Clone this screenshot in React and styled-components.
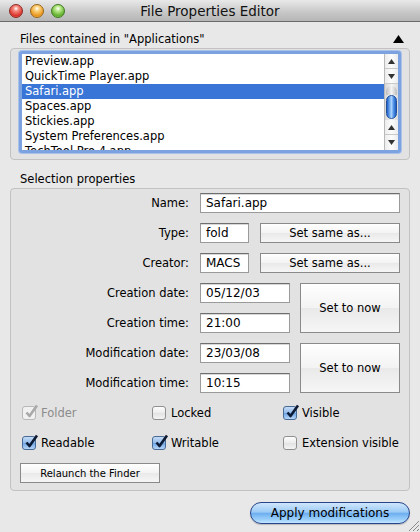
import styled, { createGlobalStyle } from 'styled-components';

const Global = createGlobalStyle`
  html, body {
    margin: 0;
    padding: 0;
    background: #e8e8e8;
  }
  * { box-sizing: border-box; }
`

const Window = styled.div`
  position: relative;
  width: 420px;
  height: 532px;
  background: #e8e8e8;
  font-family: "DejaVu Sans", "Liberation Sans", sans-serif;
  font-size: 11.5px;
  color: #000;
  overflow: hidden;
`
const TitleBar = styled.div`
  height: 22px;
  display: flex;
  align-items: center;
  padding-left: 9px;
  background: linear-gradient(#e9e9e9, #c6c6c6 60%, #b6b6b6);
  border-bottom: 1px solid #6b6b6b;
`
const Lights = styled.div`
  display: flex;
  gap: 7px;
  width: 0;
`
const Light = styled.div`
  flex: none;
  width: 14px;
  height: 14px;
  border-radius: 50%;
  border: 1px solid ${p => p.edge};
  background: radial-gradient(circle at 50% 30%, #fff 0, ${p => p.hi} 25%, ${p => p.base} 70%, ${p => p.hi} 100%);
`
const Title = styled.div`
  flex: 1;
  text-align: center;
  font-size: 13.5px;
  padding-right: 9px;
  color: #111;
`
const Content = styled.div`
  padding: 8px 10px 0 10px;
`
const SectionHead = styled.div`
  display: flex;
  align-items: center;
  justify-content: space-between;
  height: 18px;
  padding: 0 6px 0 10px;
`
const GroupBox = styled.div`
  border: 1px solid #c2c2c2;
  border-radius: 4px;
  background: #e2e2e2;
  padding: ${p => p.pad};
`
const ListFrame = styled.div`
  display: flex;
  height: 102px;
  border: 3px solid #7da2e0;
  border-radius: 3px;
  background: #fff;
  box-shadow: 0 0 0 1px #a9c2ec;
`
const ListRows = styled.div`
  flex: 1;
  overflow: hidden;
`
const Row = styled.div`
  height: 15px;
  line-height: 15px;
  padding-left: 3px;
  font-size: 11.5px;
  background: ${p => (p.selected ? '#3875d7' : '#fff')};
  color: ${p => (p.selected ? '#fff' : '#000')};
  white-space: nowrap;
`
const Scroll = styled.div`
  width: 14px;
  display: flex;
  flex-direction: column;
  background: linear-gradient(90deg, #d6d6d6, #f4f4f4 50%, #dcdcdc);
  border-left: 1px solid #b9b9b9;
`
const Arrow = styled.div`
  height: 15px;
  display: flex;
  align-items: center;
  justify-content: center;
  border-bottom: 1px solid #c9c9c9;
  background: linear-gradient(90deg, #ececec, #fcfcfc 50%, #ececec);
`
const Track = styled.div`
  flex: 1;
  display: flex;
  flex-direction: column;
  padding-top: 2px;
`
const ThumbCap = styled.div`
  height: 9px;
  margin: 0 1px;
  border-radius: 6px 6px 0 0;
  background: linear-gradient(90deg, #bdbdbd, #f4f4f4 50%, #bdbdbd);
`
const Thumb = styled.div`
  height: 24px;
  margin: 0 1px;
  border-radius: 6px;
  border: 1px solid #24509a;
  background: linear-gradient(90deg, #1d5fc8, #7fb6f3 35%, #a9d2fb 50%, #4a8de6 75%, #1f5cc0);
`
const Spacer = styled.div`
  flex: 1;
`
const Form = styled.div`
  display: flex;
  flex-direction: column;
  gap: 10px;
`
const FieldRow = styled.div`
  display: flex;
  align-items: center;
  height: 20px;
`
const Label = styled.div`
  width: 169px;
  margin-right: 11px;
  text-align: right;
  white-space: nowrap;
`
const Field = styled.div`
  width: ${p => p.w}px;
  height: 20px;
  line-height: 19px;
  padding-left: 5px;
  font-size: 12px;
  background: #fff;
  border: 1px solid #9a9a9a;
  border-top-color: #6e6e6e;
  box-shadow: inset 0 1px 0 #d8d8d8;
`
const BevelButton = styled.div`
  width: ${p => p.w}px;
  height: ${p => p.h}px;
  margin-left: ${p => p.ml}px;
  display: flex;
  align-items: center;
  justify-content: center;
  border: 1px solid #8a8a8a;
  background: linear-gradient(#ffffff, #f3f3f3 50%, #e9e9e9 51%, #f6f6f6);
  font-size: ${p => p.fs || 11.5}px;
`
const DateBlock = styled.div`
  display: grid;
  grid-template-columns: 169px 90px 100px;
  grid-template-rows: 20px 20px;
  column-gap: 11px;
  row-gap: 10px;
  align-items: center;
`
const NowButton = styled(BevelButton)`
  grid-column: 3;
  grid-row: 1 / span 2;
  height: 50px;
  margin-left: -1px;
`
const CheckGrid = styled.div`
  display: grid;
  grid-template-columns: 130px 131px 1fr;
  padding-left: 2px;
  height: 20px;
  align-items: center;
`
const Check = styled.div`
  display: flex;
  align-items: center;
  gap: 5px;
  color: ${p => (p.disabled ? '#8c8c8c' : '#000')};
  white-space: nowrap;
`
const Box = styled.div`
  width: 14px;
  height: 14px;
  border-radius: 3px;
  position: relative;
  border: 1px solid ${p => (p.disabled ? '#b8b8b8' : p.on ? '#4a6a96' : '#8f8f8f')};
  background: ${p =>
    p.disabled
      ? '#f1f1f1'
      : p.on
      ? 'linear-gradient(#c6dcf6, #8fb9ea 50%, #6ea4e4 51%, #b6d6f8)'
      : 'linear-gradient(#fdfdfd, #ececec 50%, #e2e2e2 51%, #f4f4f4)'};
  & > svg {
    position: absolute;
    left: 1px;
    top: -3px;
  }
`
const Footer = styled.div`
  display: flex;
  justify-content: flex-end;
  padding: 11px 0 0 0;
`
const ApplyButton = styled.div`
  width: 160px;
  height: 22px;
  border-radius: 11px;
  border: 1px solid #27458a;
  display: flex;
  align-items: center;
  justify-content: center;
  font-size: 12px;
  background: linear-gradient(#cfe6fc, #9ccbf6 45%, #6eaff0 52%, #9fd2fb 85%, #c5e6ff);
  box-shadow: 0 1px 1px rgba(0, 0, 0, 0.2);
`
const Grip = styled.svg`
  position: absolute;
  right: 0;
  bottom: 0;
`

const files = [
  'Preview.app',
  'QuickTime Player.app',
  'Safari.app',
  'Spaces.app',
  'Stickies.app',
  'System Preferences.app',
  'TechTool Pro 4.app',
]

const Tri = ({ up }) => (
  <svg width="7" height="5" viewBox="0 0 7 5">
    <path d={up ? 'M3.5 0L7 5H0z' : 'M0 0h7L3.5 5z'} fill="#333" />
  </svg>
)

const Tick = () => (
  <svg width="15" height="15" viewBox="0 0 15 15">
    <path d="M2.5 8.5L5.5 12L13 1.5" fill="none" stroke="currentColor" strokeWidth="2.6" strokeLinejoin="round" />
  </svg>
)

const CheckBox = ({ label, on, disabled }) => (
  <Check disabled={disabled}>
    <Box on={on} disabled={disabled} style={{ color: disabled ? '#a9a9a9' : '#0d1a33' }}>
      {on && <Tick />}
    </Box>
    {label}
  </Check>
)

const App = () => {
  return (
    <Window>
      <Global />
      <TitleBar>
        <Lights>
          <Light base="#d8322b" hi="#f58a7e" edge="#8e2a24" />
          <Light base="#e8951c" hi="#fbd27b" edge="#9a6519" />
          <Light base="#5fae2b" hi="#b9e98a" edge="#3f7a20" />
        </Lights>
        <Title>File Properties Editor</Title>
      </TitleBar>
      <Content>
        <SectionHead>
          <span>Files contained in "Applications"</span>
          <svg width="11" height="8" viewBox="0 0 11 8">
            <path d="M5.5 0L11 8H0z" fill="#000" />
          </svg>
        </SectionHead>
        <GroupBox pad="2px 8px 6px 8px">
          <ListFrame>
            <ListRows>
              {files.map(f => (
                <Row key={f} selected={f === 'Safari.app'}>{f}</Row>
              ))}
            </ListRows>
            <Scroll>
              <Arrow><Tri up /></Arrow>
              <Arrow><Tri /></Arrow>
              <Track>
                <ThumbCap />
                <Thumb />
                <Spacer />
              </Track>
              <Arrow><Tri up /></Arrow>
              <Arrow style={{ borderBottom: 'none' }}><Tri /></Arrow>
            </Scroll>
          </ListFrame>
        </GroupBox>
        <SectionHead style={{ marginTop: 10 }}>
          <span>Selection properties</span>
        </SectionHead>
        <GroupBox pad="4px 0 7px 9px">
          <Form>
            <FieldRow>
              <Label>Name:</Label>
              <Field w={200}>Safari.app</Field>
            </FieldRow>
            <FieldRow>
              <Label>Type:</Label>
              <Field w={49}>fold</Field>
              <BevelButton w={140} h={20} ml={11}>Set same as...</BevelButton>
            </FieldRow>
            <FieldRow>
              <Label>Creator:</Label>
              <Field w={49}>MACS</Field>
              <BevelButton w={140} h={20} ml={11}>Set same as...</BevelButton>
            </FieldRow>
            <DateBlock>
              <Label>Creation date:</Label>
              <Field w={90}>05/12/03</Field>
              <NowButton w={100}>Set to now</NowButton>
              <Label>Creation time:</Label>
              <Field w={90}>21:00</Field>
            </DateBlock>
            <DateBlock>
              <Label>Modification date:</Label>
              <Field w={90}>23/03/08</Field>
              <NowButton w={100}>Set to now</NowButton>
              <Label>Modification time:</Label>
              <Field w={90}>10:15</Field>
            </DateBlock>
            <CheckGrid>
              <CheckBox label="Folder" on disabled />
              <CheckBox label="Locked" />
              <CheckBox label="Visible" on />
            </CheckGrid>
            <CheckGrid>
              <CheckBox label="Readable" on />
              <CheckBox label="Writable" on />
              <CheckBox label="Extension visible" />
            </CheckGrid>
            <FieldRow>
              <BevelButton w={140} h={20} ml={0} fs={10}>Relaunch the Finder</BevelButton>
            </FieldRow>
          </Form>
        </GroupBox>
        <Footer>
          <ApplyButton>Apply modifications</ApplyButton>
        </Footer>
      </Content>
      <Grip width="14" height="14" viewBox="0 0 14 14">
        <path d="M13 3L3 13M13 7L7 13M13 11L11 13" stroke="#8a8a8a" strokeWidth="1" />
      </Grip>
    </Window>
  );
}

export default App;
